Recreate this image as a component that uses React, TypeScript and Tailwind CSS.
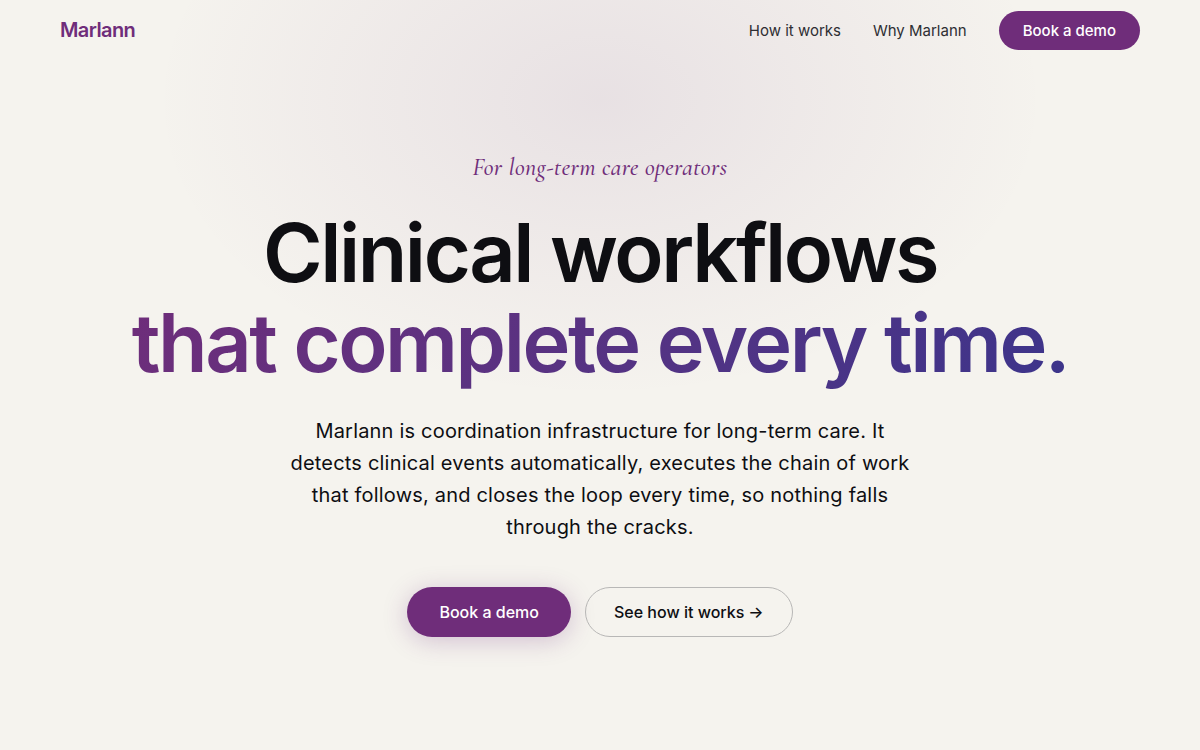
import React from 'react';

const navLinks = [
  { label: 'How it works', href: '#how' },
  { label: 'Why Marlann', href: '#why' },
];

const Header: React.FC = () => {
  return (
    <header className="relative z-10 px-15 py-[11px]">
      <div className="flex items-center justify-between">
        <a href="#" className="text-xl leading-7 pb-px font-semibold tracking-[-0.03em] text-[#6f2d7a]">
          Marlann
        </a>
        <nav className="flex items-center gap-8 text-[15px] leading-[23px]">
          {navLinks.map((link) => (
            <a key={link.label} href={link.href} className="text-[#2e2e33]">
              {link.label}
            </a>
          ))}
          <button type="button" className="px-6 py-2 rounded-full bg-[#6f2d7a] text-white font-medium">
            Book a demo
          </button>
        </nav>
      </div>
    </header>
  );
};

const Hero: React.FC = () => {
  return (
    <section className="relative z-10 flex flex-col items-center px-6 pt-[91px] pb-28 text-center">
      <p className="font-['Cormorant_Garamond','Liberation_Serif',serif] italic font-medium text-2xl leading-8 tracking-[0.02em] text-[#6f2d7a]">
        For long-term care operators
      </p>
      <h1 className="mt-6 text-[81px] leading-[90px] font-semibold tracking-[-0.03em] text-[#0e0e12]">
        <span className="block">Clinical workflows</span>
        <span className="block pb-2 bg-linear-135 from-[#6f2d7a] to-[#3b348b] bg-clip-text text-transparent">
          that complete every time.
        </span>
      </h1>
      <p className="mt-[19px] max-w-[640px] text-xl leading-8 tracking-[0.01em] text-[#0e0e12]">
        Marlann is coordination infrastructure for long-term care. It detects clinical events
        automatically, executes the chain of work that follows, and closes the loop every time, so
        nothing falls through the cracks.
      </p>
      <div className="mt-11 flex items-center gap-3.5 text-base font-medium">
        <button
          type="button"
          className="h-[50px] px-8 rounded-full bg-[#6f2d7a] text-white shadow-[0_4px_24px_rgba(107,44,122,0.25)]"
        >
          Book a demo
        </button>
        <a
          href="#how"
          className="inline-flex items-center gap-1 h-[50px] px-7 rounded-full border border-[#b8b7b6] text-[#0e0e12]"
        >
          See how it works <span aria-hidden="true">→</span>
        </a>
      </div>
    </section>
  );
};

const App: React.FC = () => {
  return (
    <div className="relative min-h-screen overflow-hidden bg-[#f5f3ee] font-[Inter,sans-serif]">
      {/* Soft glow behind the headline */}
      <div className="absolute -top-50 left-1/2 -translate-x-1/2 w-[900px] h-[600px] bg-[radial-gradient(ellipse,rgba(100,44,122,0.09)_0%,rgba(107,44,122,0.04)_40%,transparent_70%)]" />
      <Header />
      <Hero />
    </div>
  );
};

export default App;
